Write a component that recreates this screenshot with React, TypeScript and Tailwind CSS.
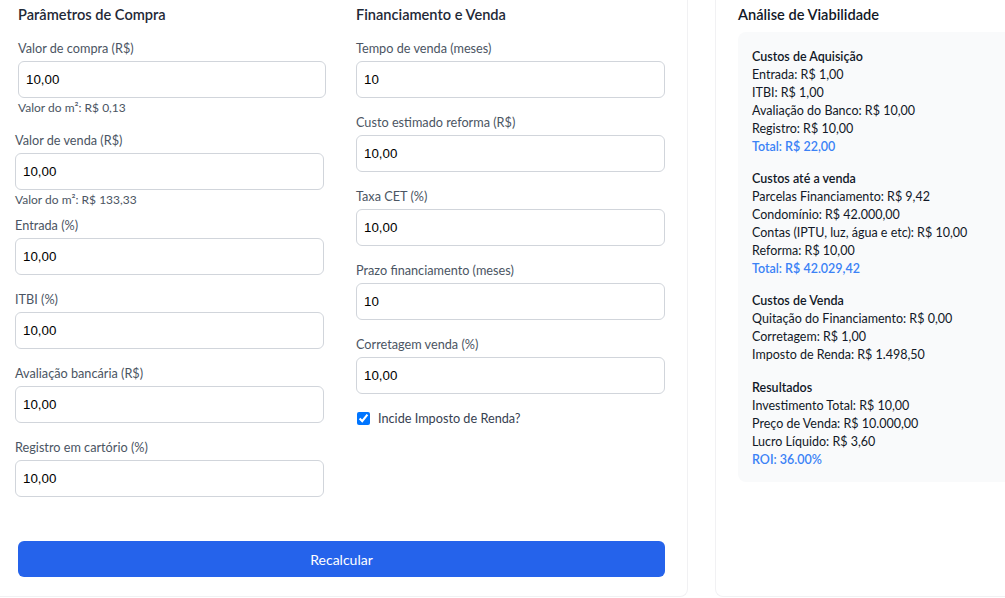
import React from 'react';

interface FieldProps {
  label: string;
  value: string;
  hint?: string;
  className?: string;
}

function Field({ label, value, hint, className = '' }: FieldProps) {
  return (
    <div className={className}>
      <label className="block text-[12.7px] leading-5 text-[#4b5563] mb-[3px]">{label}</label>
      <input
        type="text"
        defaultValue={value}
        className="block w-full h-[37px] rounded-md border border-[#d1d5db] bg-white px-[7px] font-['Liberation_Sans',Arial,sans-serif] text-[13.33px] text-black outline-none"
      />
      {hint && <p className="mt-[2px] text-[12px] leading-4 text-[#4b5563]">{hint}</p>}
    </div>
  );
}

function Line({ children, total }: { children: React.ReactNode; total?: boolean }) {
  return (
    <p className={total ? 'font-semibold text-[#3b82f6]' : 'text-[#111827]'}>{children}</p>
  );
}

export default function App() {
  return (
    <div className="w-[1005px] h-[598px] overflow-hidden bg-white flex font-['Lato',sans-serif]">
      {/* Formulário */}
      <div className="w-[688px] h-[597px] shrink-0 border-r border-b border-[#f1f1f3] rounded-br-lg pl-[18px] pr-[22px] pt-[5px]">
        <div className="flex gap-[30px]">
          <div className="w-[308px] flex flex-col">
            <h2 className="text-[14.6px] leading-5 font-semibold text-[#1f2937]">Parâmetros de Compra</h2>
            <Field className="mt-[13px]" label="Valor de compra (R$)" value="10,00" hint="Valor do m²: R$ 0,13" />
            <div className="-ml-[3px] w-[309px] flex flex-col">
              <Field className="mt-[14px]" label="Valor de venda (R$)" value="10,00" hint="Valor do m²: R$ 133,33" />
              <Field className="mt-[7px]" label="Entrada (%)" value="10,00" />
              <Field className="mt-[14px]" label="ITBI (%)" value="10,00" />
              <Field className="mt-[14px]" label="Avaliação bancária (R$)" value="10,00" />
              <Field className="mt-[14px]" label="Registro em cartório (%)" value="10,00" />
            </div>
          </div>
          <div className="w-[309px] flex flex-col">
            <h2 className="text-[14.6px] leading-5 font-semibold text-[#1f2937]">Financiamento e Venda</h2>
            <Field className="mt-[13px]" label="Tempo de venda (meses)" value="10" />
            <Field className="mt-[14px]" label="Custo estimado reforma (R$)" value="10,00" />
            <Field className="mt-[14px]" label="Taxa CET (%)" value="10,00" />
            <Field className="mt-[14px]" label="Prazo financiamento (meses)" value="10" />
            <Field className="mt-[14px]" label="Corretagem venda (%)" value="10,00" />
            <label className="mt-[14px] flex items-center gap-2 leading-5 text-[12.7px] text-[#374151]">
              <input type="checkbox" defaultChecked className="ml-[1px] h-[13px] w-[13px]" />
              Incide Imposto de Renda?
            </label>
          </div>
        </div>
        <button className="mt-[44px] w-[647px] h-[36px] rounded-md bg-[#2563eb] text-white text-[14px]">
          Recalcular
        </button>
      </div>

      {/* Análise */}
      <div className="ml-[27px] w-[330px] h-[597px] shrink-0 border-l border-b border-[#f1f1f3] rounded-bl-lg pl-[22px] pt-[5px]">
        <h2 className="text-[14.6px] leading-5 font-semibold text-[#111827]">Análise de Viabilidade</h2>
        <div className="mt-[7px] rounded-lg bg-[#f9fafb] pl-[14px] pt-[16px] pb-[13px] text-[12.5px] leading-[18px] flex flex-col">
          <div>
            <p className="font-semibold text-[#111827]">Custos de Aquisição</p>
            <Line>Entrada: R$ 1,00</Line>
            <Line>ITBI: R$ 1,00</Line>
            <Line>Avaliação do Banco: R$ 10,00</Line>
            <Line>Registro: R$ 10,00</Line>
            <Line total>Total: R$ 22,00</Line>
          </div>
          <div className="mt-[14px]">
            <p className="font-semibold text-[#111827]">Custos até a venda</p>
            <Line>Parcelas Financiamento: R$ 9,42</Line>
            <Line>Condomínio: R$ 42.000,00</Line>
            <Line>Contas (IPTU, luz, água e etc): R$ 10,00</Line>
            <Line>Reforma: R$ 10,00</Line>
            <Line total>Total: R$ 42.029,42</Line>
          </div>
          <div className="mt-[14px]">
            <p className="font-semibold text-[#111827]">Custos de Venda</p>
            <Line>Quitação do Financiamento: R$ 0,00</Line>
            <Line>Corretagem: R$ 1,00</Line>
            <Line>Imposto de Renda: R$ 1.498,50</Line>
          </div>
          <div className="mt-[15px]">
            <p className="font-semibold text-[#111827]">Resultados</p>
            <Line>Investimento Total: R$ 10,00</Line>
            <Line>Preço de Venda: R$ 10.000,00</Line>
            <Line>Lucro Líquido: R$ 3,60</Line>
            <Line total>ROI: 36.00%</Line>
          </div>
        </div>
      </div>
    </div>
  );
}
